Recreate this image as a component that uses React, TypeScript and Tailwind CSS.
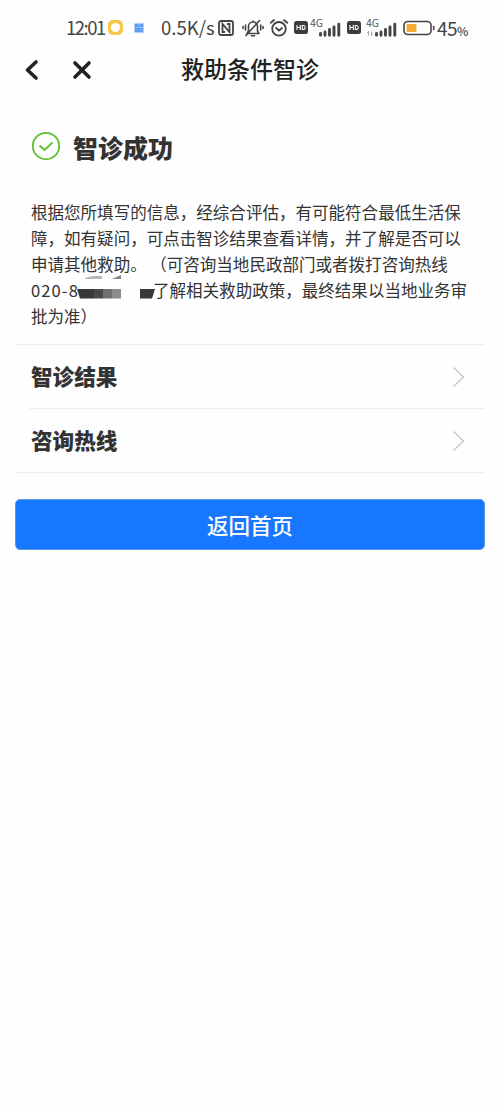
import React from "react";

const Signal = ({ arrows = false }: { arrows?: boolean }) => (
  <div className="relative h-[20px] w-[31px] shrink-0">
    <span className="absolute -left-px -top-px whitespace-nowrap text-[10.5px] leading-[12px] text-[#555]">4G</span>
    <svg width="31" height="20" viewBox="0 0 31 20">
      {arrows && (
        <path d="M1.5 13.5v4M0.3 14.7l1.2-1.2M4.5 13.5v4M5.7 16.3l-1.2 1.2" stroke="#888" strokeWidth=".8" fill="none" />
      )}
      <path
        d="M9.5 15.5v1.7M14 14v3.2M18.5 11.5v5.7M23 9v8.2M27.8 6.3v10.9"
        stroke="#444"
        strokeWidth="2.9"
        strokeLinecap="round"
      />
    </svg>
  </div>
);

const HdBadge = () => (
  <svg width="14" height="13" viewBox="0 0 14 13" className="shrink-0">
    <rect width="14" height="13" rx="2.5" fill="#3c3c3c" />
    <path d="M3 4v5M6.3 4v5M3 6.5h3.3M8.3 4.5v4h1.2q1.7 0 1.7-2t-1.7-2z" stroke="#fff" strokeWidth="1.1" fill="none" />
  </svg>
);

const StatusBar = () => (
  <div className="flex h-[50px] items-center pl-[66px] pt-[5px] text-[#444]">
    <span className="-mt-px w-[41px] shrink-0 whitespace-nowrap text-[18.5px] leading-none tracking-[-1.5px]">12:01</span>
    <svg width="17" height="17" viewBox="0 0 17 17" className="shrink-0">
      <rect x="1" y="1" width="15" height="15" rx="5" fill="#f8c74a" />
      <circle cx="8.5" cy="8.5" r="4.6" fill="#fff" />
    </svg>
    <svg width="10" height="10" viewBox="0 0 10 10" className="ml-[10px] shrink-0">
      <rect x=".5" y=".5" width="9" height="9" fill="#5b9cf3" />
      <path d="M1 4.5h8M5 1v3M3 7h1M6 7h2" stroke="#a9cbf9" strokeWidth=".8" />
    </svg>
    <span className="-mt-px ml-[17px] w-[57px] shrink-0 whitespace-nowrap text-[18.5px] leading-none">0.5K/s</span>
    <svg width="16" height="16" viewBox="0 0 16 16" fill="none" stroke="#444" strokeWidth="1.8" className="shrink-0">
      <rect x="1" y="1" width="14" height="14" rx="2" />
      <path d="M7 12H4.5V4l7 8V4H9" />
    </svg>
    <svg
      width="22"
      height="20"
      viewBox="0 0 22 20"
      fill="none"
      stroke="#444"
      strokeWidth="1.6"
      strokeLinecap="round"
      strokeLinejoin="round"
      className="ml-[8px] shrink-0"
    >
      <path d="M5 15.5h12l-1.5-2.5V8.5a4.5 4.5 0 0 0-9 0V13zM9.5 17.8h3M11 3.8V3M17.5 2.5 4 17.5M3.5 7v5M1 8.5v2M18.7 7v5M21 8.5v2" />
    </svg>
    <svg
      width="20"
      height="20"
      viewBox="0 0 20 20"
      fill="none"
      stroke="#444"
      strokeWidth="1.8"
      strokeLinecap="round"
      className="ml-[5px] shrink-0"
    >
      <circle cx="10" cy="10.8" r="6.8" />
      <path d="M7 10l3 2.5 3-2.5M1.8 4.8 5 2M18.2 4.8 15 2" />
    </svg>
    <div className="ml-[5px] flex shrink-0 items-center">
      <HdBadge />
      <div className="ml-[3px] flex">
        <Signal />
      </div>
    </div>
    <div className="ml-[5px] flex shrink-0 items-center">
      <HdBadge />
      <div className="ml-[6px] flex">
        <Signal arrows />
      </div>
    </div>
    <svg width="32" height="16" viewBox="0 0 32 16" className="ml-[5px] shrink-0">
      <rect x="1" y="1.5" width="27" height="13" rx="3.8" fill="none" stroke="#444" strokeWidth="1.6" />
      <rect x="3.5" y="4" width="10" height="8" rx="1" fill="#f3ad36" />
      <path d="M30.7 6.5v3" stroke="#444" strokeWidth="1.6" strokeLinecap="round" />
    </svg>
    <span className="-mt-px ml-[2px] whitespace-nowrap text-[19px] leading-none tracking-[-0.5px]">
      45<span className="text-[12px] font-medium">%</span>
    </span>
  </div>
);

const NavBar = () => (
  <div className="grid h-[40px] grid-cols-[1fr_auto_1fr] items-center">
    <div className="flex items-center pl-[24px]">
      <svg width="16" height="22" viewBox="0 0 16 22" fill="none" stroke="#222" strokeWidth="3.6" strokeLinecap="round" strokeLinejoin="round">
        <path d="M12 3 3.5 11 12 19" />
      </svg>
      <svg width="20" height="20" viewBox="0 0 20 20" fill="none" stroke="#222" strokeWidth="3.6" strokeLinecap="round" className="ml-[32px]">
        <path d="m3 3 14 14M17 3 3 17" />
      </svg>
    </div>
    <h1 className="-mt-[3px] text-[23px] font-medium leading-none text-[#222]">救助条件智诊</h1>
  </div>
);

// The phone number is masked with blocks
const MaskedDigits = () => (
  <svg width="76" height="26" viewBox="0 0 76 26" className="shrink-0 overflow-visible">
    <path d="M0 12h17v9.5H3z" fill="#383838" />
    <path d="M17 12h9v9.5h-9z" fill="#484848" />
    <path d="M26 12h9v9.5h-9z" fill="#707070" />
    <path d="M35 12h9v9.5h-9z" fill="#8c8c8c" />
    <path d="M7 2q4-3 11-3h7v3z" fill="#b8b8b8" />
    <path d="M35 2 44-2v4z" fill="#858585" />
    <path d="M63 12h15l-3 9.5H63z" fill="#383838" />
  </svg>
);

const items = ["智诊结果", "咨询热线"];

const App = () => {
  return (
    <div
      lang="zh-CN"
      className="min-h-[1111px] w-[500px] overflow-hidden bg-[#fefefe] font-['Noto_Sans_CJK_SC',sans-serif] text-[#333]"
    >
      <StatusBar />
      <NavBar />

      <main className="px-[15px]">
        <div className="flex h-[109px] items-center pl-[16px] pt-[7px]">
          <svg width="30" height="30" viewBox="0 0 30 30" fill="none" stroke="#5cc12f" strokeWidth="1.8" className="-mt-[5px] shrink-0">
            <circle cx="15" cy="15" r="13.2" />
            <path d="m8.5 14.5 5 4.5 8-7.5" />
          </svg>
          <h2 className="-mt-[2px] ml-[12px] text-[25px] font-black leading-none">智诊成功</h2>
        </div>

        <div className="whitespace-nowrap pb-[15px] pl-[16px] text-[16.54px] leading-[26px] [text-spacing-trim:space-all]">
          <p>根据您所填写的信息，经综合评估，有可能符合最低生活保</p>
          <p>障，如有疑问，可点击智诊结果查看详情，并了解是否可以</p>
          <p>
            申请其他救助。<span className="ml-[3.5px]">（可咨询当地民政部门或者拨打咨询热线</span>
          </p>
          <p className="flex">
            <span className="w-[46px] shrink-0 tracking-[1.1px]">020-8</span>
            <MaskedDigits />
            <span>了解相关救助政策，最终结果以当地业务审</span>
          </p>
          <p>批为准）</p>
        </div>

        <ul className="border-y border-[#eee]">
          {items.map((item, index) => (
            <li
              key={item}
              className={
                index > 0
                  ? "ml-[14px] flex h-[64px] items-center justify-between border-t border-[#eee] pl-[2px] pr-[20px]"
                  : "ml-[14px] flex h-[63px] items-center justify-between pl-[2px] pr-[20px]"
              }
            >
              <span className="-mt-px text-[21.6px] font-black leading-none">{item}</span>
              <svg width="13" height="22" viewBox="0 0 13 22" fill="none" stroke="#c8c8c8" strokeWidth="1.5">
                <path d="m1.5 1.5 10 9.5-10 9.5" />
              </svg>
            </li>
          ))}
        </ul>

        <button className="mt-[26px] flex h-[51px] w-full items-center justify-center rounded-[5px] border border-[#5b9bea] bg-[#1877ff] text-[21.5px] font-medium leading-none text-white">
          返回首页
        </button>
      </main>
    </div>
  );
};

export default App;
